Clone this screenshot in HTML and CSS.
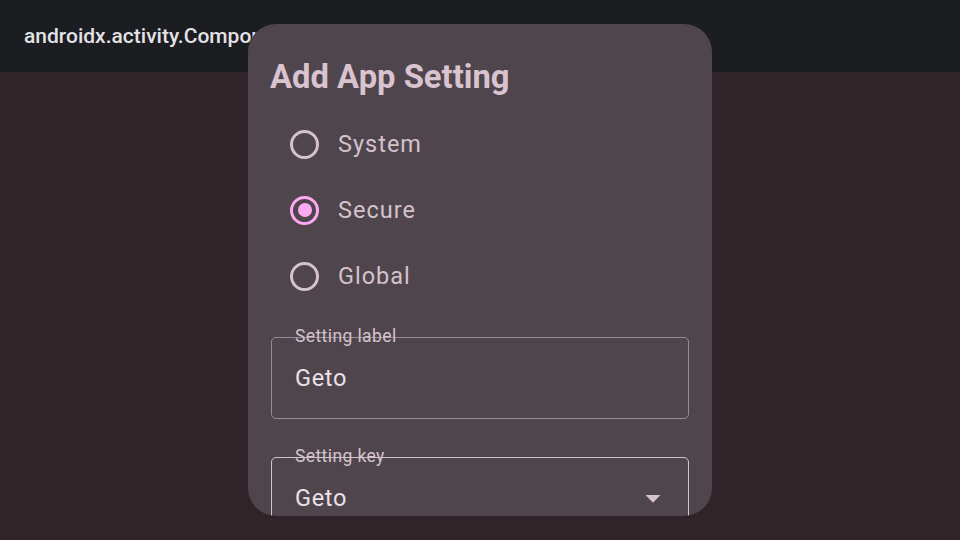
FILE: index.html
```html
<!DOCTYPE html>
<html>
<head>
<meta charset="utf-8">
<link rel="stylesheet" href="styles.css">
</head>
<body>
<div class="screen">
  <header class="appbar"><span class="appbar-title">androidx.activity.ComponentActivity</span></header>
  <main class="content"></main>
  <div class="dialog">
    <h1 class="dialog-title">Add App Setting</h1>
    <div class="radio-group">
      <div class="radio-row"><span class="radio"></span><span class="radio-label">System</span></div>
      <div class="radio-row"><span class="radio radio-on"><span class="radio-dot"></span></span><span class="radio-label">Secure</span></div>
      <div class="radio-row"><span class="radio"></span><span class="radio-label">Global</span></div>
    </div>
    <div class="field">
      <span class="field-label">Setting label</span>
      <span class="field-value">Geto</span>
    </div>
    <div class="field field-strong">
      <span class="field-label">Setting key</span>
      <span class="field-value">Geto</span>
      <svg class="field-arrow" width="16" height="8" viewBox="0 0 16 8"><path d="M0.5 0 L15.5 0 L8 7.8 Z" fill="#d5c2cc"/></svg>
    </div>
  </div>
</div>
</body>
</html>
```
FILE: styles.css
```css
* { box-sizing: border-box; }
html, body { margin: 0; padding: 0; }
body {
  width: 960px;
  height: 540px;
  overflow: hidden;
  font-family: Roboto, "Noto Sans", sans-serif;
  background: #302429;
}
.screen {
  position: relative;
  width: 960px;
  height: 540px;
  display: flex;
  flex-direction: column;
}
.appbar {
  height: 72px;
  background: #1b1d20;
  display: flex;
  align-items: center;
  padding-left: 24px;
  flex-shrink: 0;
}
.appbar-title {
  color: #e3e2e6;
  font-size: 21px;
  font-weight: 500;
  white-space: nowrap;
}
.content {
  flex: 1;
  background: #302429;
}
.dialog {
  position: absolute;
  left: 248px;
  top: 24px;
  width: 464px;
  height: 492px;
  background: #4f454c;
  border-radius: 28px;
  overflow: hidden;
  padding: 0 23px;
}
.dialog-title {
  margin: 31px 0 0 -1px;
  font-size: 32.8px;
  line-height: 44px;
  font-weight: 700;
  color: #d9c3ce;
  letter-spacing: 0;
}
.radio-group {
  margin-top: 12px;
  display: flex;
  flex-direction: column;
}
.radio-row {
  height: 66px;
  display: flex;
  align-items: center;
  padding-left: 19px;
}
.radio {
  width: 29px;
  height: 29px;
  border-radius: 50%;
  border: 3px solid #d5c2cc;
  display: flex;
  align-items: center;
  justify-content: center;
  flex-shrink: 0;
}
.radio-on { border-color: #ffa9f3; }
.radio-dot {
  width: 14px;
  height: 14px;
  border-radius: 50%;
  background: #ffa9f3;
}
.radio-label {
  margin-left: 19px;
  font-size: 23.5px;
  letter-spacing: 1px;
  color: #d5c2cc;
}
.field {
  position: relative;
  margin-top: 28px;
  height: 82px;
  border: 1.3px solid #978c94;
  border-radius: 5px;
  display: flex;
  align-items: center;
  padding-left: 23px;
}
.field + .field { margin-top: 38px; }
.field-strong { border-color: #d2c3cb; }
.field-label {
  position: absolute;
  left: 23px;
  top: -13px;
  font-size: 17.5px;
  line-height: 22px;
  letter-spacing: 0.4px;
  color: #d5c2cc;
}
.field-value {
  font-size: 23.5px;
  letter-spacing: 0.7px;
  color: #ede0e7;
}
.field-arrow {
  position: absolute;
  right: 27px;
  top: 37px;
}
```
